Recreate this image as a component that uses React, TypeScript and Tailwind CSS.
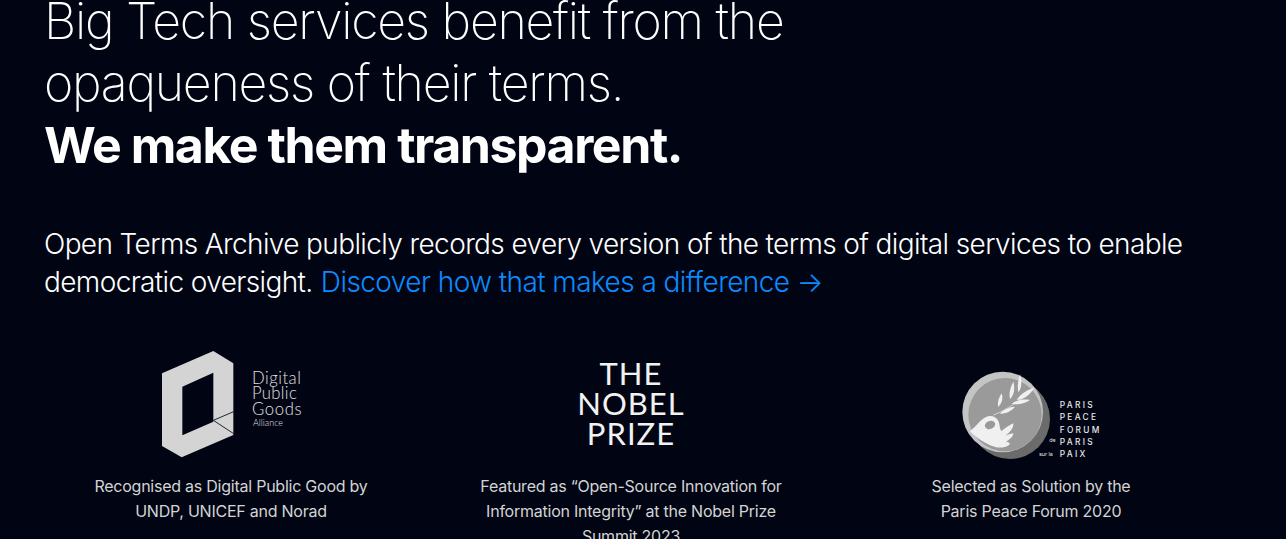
function DpgLogo() {
  return (
    <svg viewBox="3 0 540 375" className="w-[180px] h-[125px]">
      <polygon
        fill="#d4d4d4"
        fillRule="evenodd"
        points="66,100 220,33 280,70 280,285 125,352 66,318 66,100 127,140 127,286 220,245 220,98 127,140"
      />
      <path d="M220 241 L281 215 M220 241 L281 281" stroke="#000413" strokeWidth="2.5" fill="none" />
      <g fill="#e0e0e0" fontFamily="Lato, sans-serif" fontWeight="300">
        <text x="336" y="131" fontSize="50" letterSpacing="1.5">Digital</text>
        <text x="336" y="177" fontSize="50" letterSpacing="1">Public</text>
        <text x="336" y="224" fontSize="50" letterSpacing="2">Goods</text>
        <text x="339" y="257" fontSize="27">Alliance</text>
      </g>
    </svg>
  );
}

function ParisLogo() {
  return (
    <svg viewBox="0 0 510 315" className="w-[170px] h-[105px]">
      <circle cx="180" cy="177" r="120" fill="#6b6b6b" />
      <circle cx="158" cy="156" r="121" fill="#c4c4c4" />
      <circle cx="165" cy="164" r="110" fill="#9a9a9a" />
      {/* branche + main, coords of the crop */}
      <g transform="translate(30 15)" fill="#f0f0f0">
        <path d="M100 150 C140 135 185 105 222 68" stroke="#f0f0f0" strokeWidth="2" fill="none" />
        <path d="M114 126 C112 110 117 97 125 85 C130 100 126 116 114 126Z" />
        <path d="M150 102 C146 82 152 65 160 50 C166 70 162 90 150 102Z" />
        <path d="M175 82 C171 62 175 45 180 28 C186 48 186 68 175 82Z" />
        <path d="M170 105 C182 85 200 76 222 68 C212 88 195 102 170 105Z" />
        <path d="M155 116 C172 104 190 102 210 105 C196 116 175 120 155 116Z" />
        <path d="M120 146 C132 132 148 126 165 125 C155 138 138 146 120 146Z" />
        <path d="M30 198 C48 185 60 165 78 156 C90 150 108 153 115 168 C120 178 118 192 125 198 C135 190 148 180 160 175 C162 188 148 205 136 212 C145 208 155 205 160 205 C160 215 148 225 138 230 C142 230 148 232 150 236 C145 245 125 250 108 247 C85 240 50 222 30 198Z" />
        <ellipse cx="90" cy="180" rx="16" ry="12" transform="rotate(-20 90 180)" fill="#9a9a9a" />
      </g>
      <g fill="#e8e8e8" fontFamily="Inter, sans-serif" fontWeight="500" fontSize="25" letterSpacing="7">
        <text x="329" y="144">PARIS</text>
        <text x="329" y="181">PEACE</text>
        <text x="329" y="218">FORUM</text>
        <text x="329" y="255">PARIS</text>
        <text x="329" y="291">PAIX</text>
      </g>
      <g fill="#e8e8e8" fontFamily="Inter, sans-serif" fontSize="16">
        <text x="298" y="246">de</text>
        <text x="267" y="289">sur la</text>
      </g>
    </svg>
  );
}

export default function App() {
  const cols = [
    {
      logo: <DpgLogo />,
      text: "Recognised as Digital Public Good by UNDP, UNICEF and Norad",
      width: "w-[300px]",
    },
    {
      logo: (
        <div className="text-center text-[31px] leading-[30px] tracking-[1px] text-[#f2f2f2] font-['Lato',sans-serif]">
          THE
          <br />
          NOBEL
          <br />
          PRIZE
        </div>
      ),
      text: "Featured as “Open-Source Innovation for Information Integrity” at the Nobel Prize Summit 2023",
      width: "w-[310px]",
    },
    {
      logo: (
        <div className="self-end pl-[8px]">
          <ParisLogo />
        </div>
      ),
      text: "Selected as Solution by the Paris Peace Forum 2020",
      width: "w-[210px]",
    },
  ];

  return (
    <div className="h-[539px] overflow-hidden bg-[#000413] text-white font-['Inter',sans-serif]">
      <div className="-mt-[10px] px-[44px]">
        <h1 className="text-[50px] leading-[62px] font-extralight tracking-tight max-w-[800px]">
          Big Tech services benefit from the opaqueness of their terms.
          <br />
          <span className="font-bold tracking-[-1.45px]">We make them transparent.</span>
        </h1>
        <p className="mt-[49px] text-[28px] leading-[38px] font-light tracking-[-0.62px] max-w-[1180px]">
          Open Terms Archive publicly records every version of the terms of digital services to enable democratic
          oversight. <a className="ml-[1px] tracking-[-0.57px] text-[#0a8bff]">Discover how that makes a difference →</a>
        </p>
      </div>
      <div className="mt-[39px] ml-[31px] grid w-[1200px] grid-cols-3">
        {cols.map((c) => (
          <div key={c.text} className="flex flex-col items-center">
            <div className="flex h-[125px] items-center justify-center">{c.logo}</div>
            <p className={`mt-[9px] ${c.width} text-center text-[16px] leading-[25px] tracking-[-0.24px] text-[#d4d4d4]`}>{c.text}</p>
          </div>
        ))}
      </div>
    </div>
  );
}
